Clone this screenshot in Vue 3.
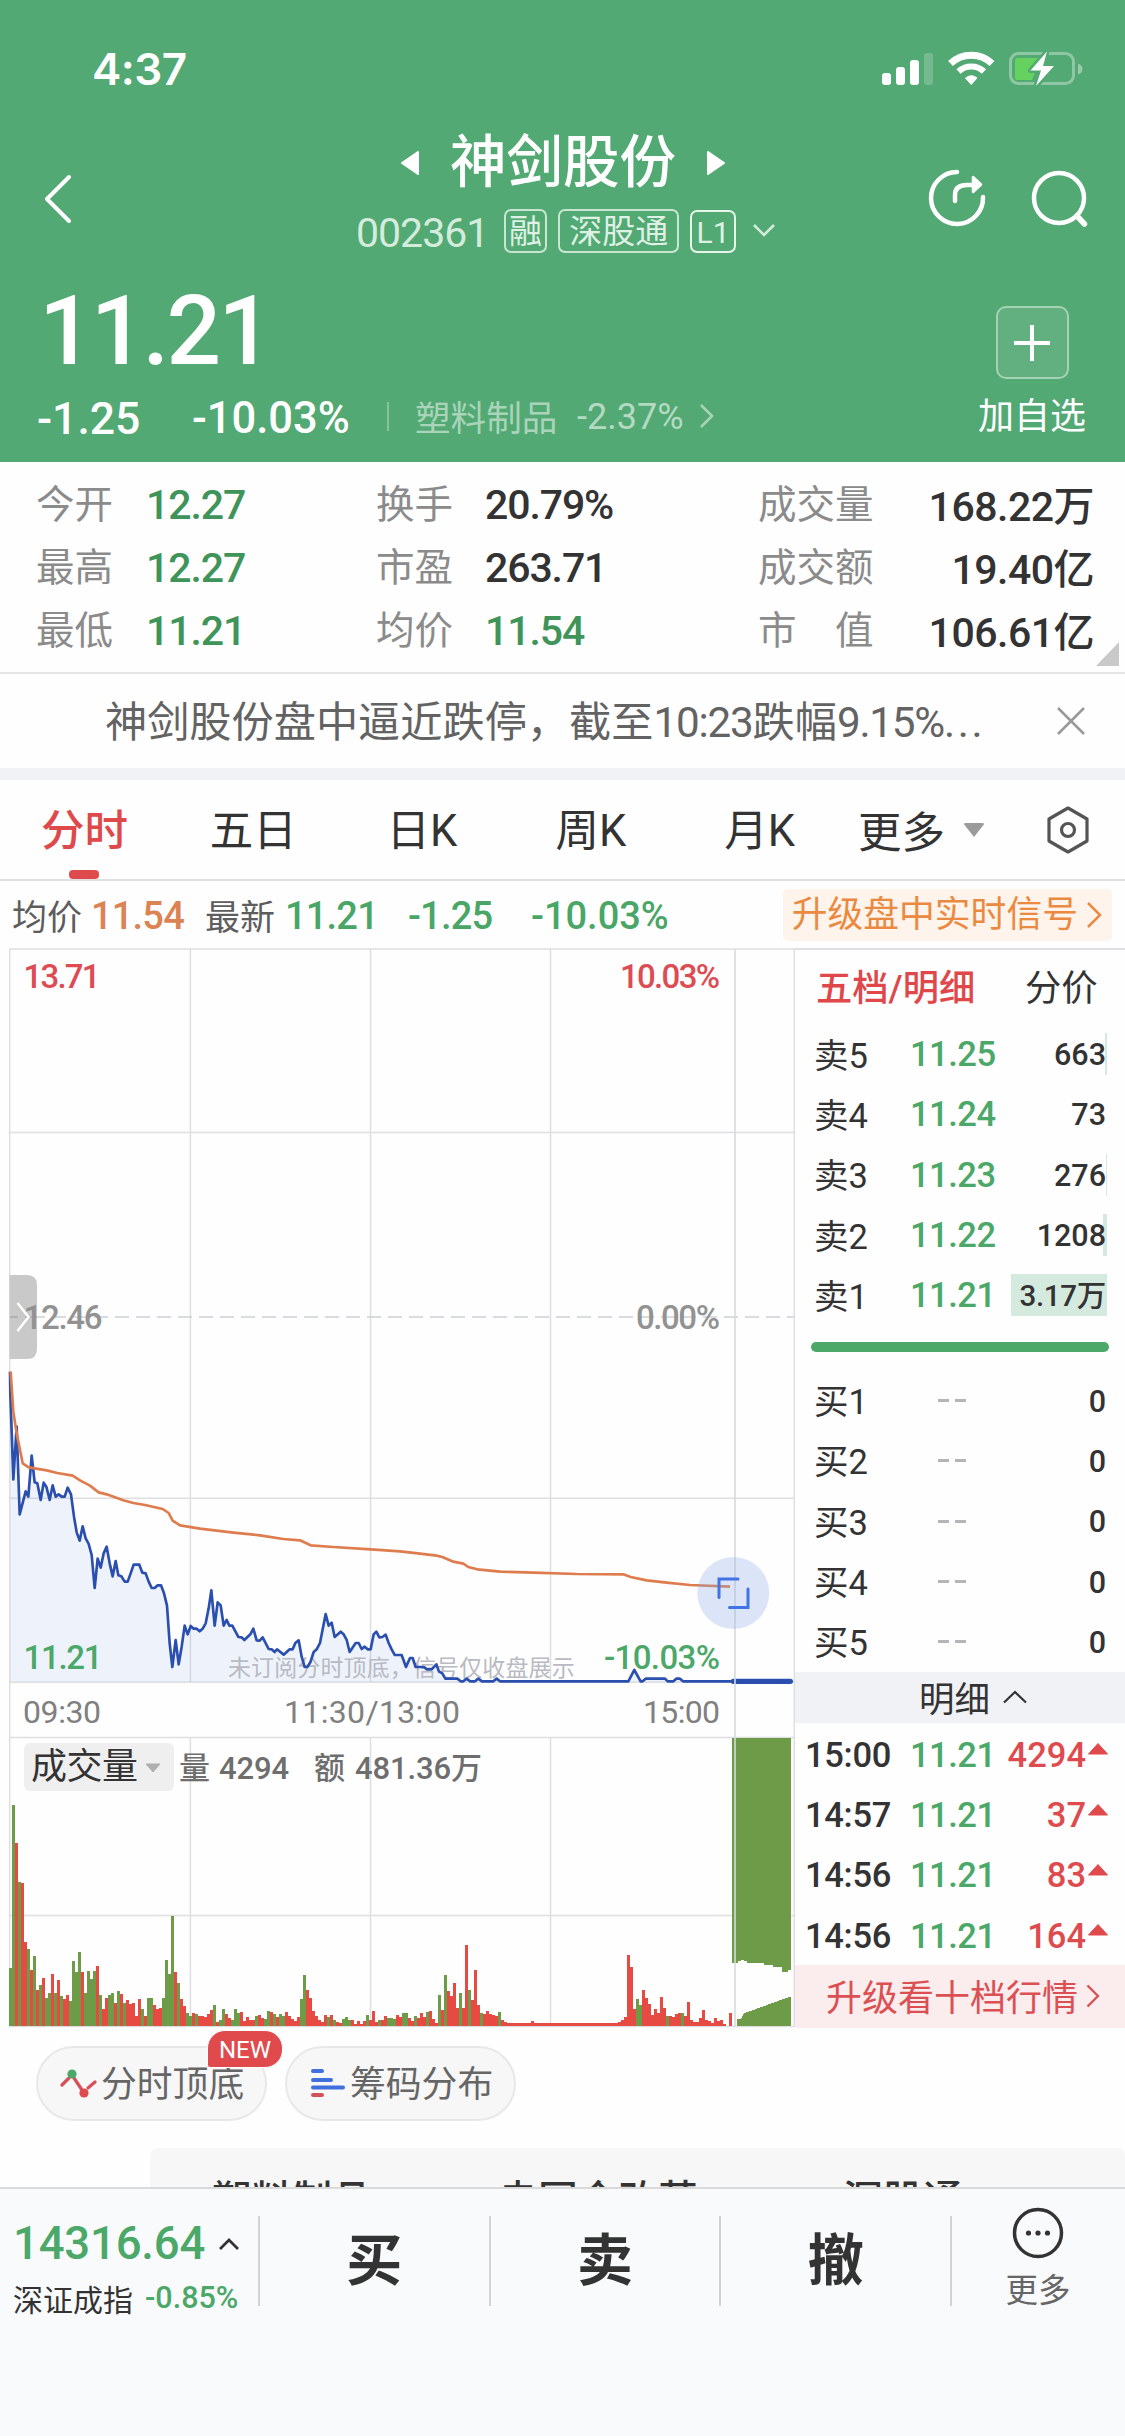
<script setup>
const quotes = [
  ['今开', '12.27', true, '换手', '20.79%', false, '成交量', '168.22万'],
  ['最高', '12.27', true, '市盈', '263.71', false, '成交额', '19.40亿'],
  ['最低', '11.21', true, '均价', '11.54', true, '市　值', '106.61亿'],
]
const periods = ['分时', '五日', '日K', '周K', '月K']
const asks = [
  ['卖5', '11.25', '663', 2],
  ['卖4', '11.24', '73', 0],
  ['卖3', '11.23', '276', 1],
  ['卖2', '11.22', '1208', 4],
  ['卖1', '11.21', '3.17万', 96],
]
const bids = ['买1', '买2', '买3', '买4', '买5']
const deals = [
  ['15:00', '11.21', '4294'],
  ['14:57', '11.21', '37'],
  ['14:56', '11.21', '83'],
  ['14:56', '11.21', '164'],
]

// Both chart series use a grid of one third of a pixel.
const price = '30,95 31,160 40,418 50,260 59,523 77,454 85,470 95,347 104,427 112,430 122,480 131,428 139,440 149,480 158,436 167,470 176,463 185,470 194,470 203,443 213,463 222,530 230,577 239,602 248,559 257,595 266,612 275,645 284,744 293,656 302,683 311,640 320,620 329,670 338,709 347,663 355,706 364,709 374,725 383,725 392,700 401,674 418,674 427,698 437,700 446,725 455,744 464,744 473,736 483,736 492,760 501,797 509,910 517,981 527,900 536,973 545,920 554,857 563,883 572,858 581,866 590,866 599,874 608,866 617,850 626,805 634,751 644,857 653,787 662,796 671,857 680,840 688,857 697,857 715,891 725,892 733,900 751,883 760,866 770,901 779,902 788,892 806,927 815,928 824,936 831,928 851,944 869,928 878,928 886,909 896,901 905,950 914,981 922,981 931,967 941,936 950,928 960,909 977,822 986,857 995,848 1004,891 1022,875 1031,883 1040,900 1049,936 1067,909 1076,909 1085,927 1094,920 1103,928 1112,928 1121,883 1129,875 1138,892 1147,891 1157,884 1166,909 1175,928 1184,945 1205,945 1218,981 1230,954 1238,954 1247,981 1272,981 1280,988 1295,988 1309,973 1317,995 1327,1000 1336,1016 1372,1016 1382,1024 1390,1024 1400,1016 1410,1024 1425,1024 1435,1016 1446,1024 1480,1024 1490,1016 1500,1024 1885,1024 1903,990 1922,1024 1928,1024 1937,1016 1995,1016 2003,1024 2020,1024 2029,1016 2040,1016 2049,1024 2200,1024'
const average = '32,95 40,215 50,280 68,370 86,382 140,391 172,399 218,407 240,421 270,437 296,457 320,463 370,481 400,489 435,495 488,507 506,519 518,542 540,556 600,566 700,578 780,586 850,597 900,601 932,616 1000,621 1112,628 1200,634 1260,641 1310,647 1327,651 1360,665 1390,671 1405,681 1432,688 1500,695 1600,698 1730,702 1870,703 1892,711 1940,721 2000,728 2070,735 2190,740'
const volume = 'g744 g254 r370 g487 r489 r667 g687 r750 g709 r810 g795 r775 g835 g819 r762 g820 r780 g829 r838 r825 g843 g723 g755 g697 r755 g820 g753 g776 g753 r738 g825 r867 r835 g825 g818 r849 g813 r823 g850 r841 r851 r850 r888 r837 g868 r887 g834 g834 r855 r867 r865 g834 g721 g762 g589 r755 g790 r838 r858 g879 g888 r878 g881 r888 r888 r890 r882 r870 g855 r906 g901 g868 r882 r893 g900 g867 g879 r877 r903 r891 r900 r900 g889 r884 r894 g898 g873 r876 g882 r891 g883 g888 r875 r888 r898 r903 r891 g837 g766 r809 r834 r874 r889 r900 r905 r885 g891 r886 g899 r905 r908 g897 g891 g899 r901 r911 r904 r911 r903 g885 r899 r874 r905 g901 r901 r889 g894 g894 g896 r884 r890 g880 g880 r894 r902 g888 r893 r880 r891 g876 r874 r898 r908 g825 r869 g766 r813 r829 r790 r864 g820 r864 r675 g810 r841 r750 r855 g880 r882 r874 r882 r884 r889 g876 r899 r905'
  .split(' ')
  .concat(Array.from({ length: 37 }, (_, k) => (k === 8 ? 'r902' : 'r910')))
  .concat('r907 r900 r890 r705 r742 r867 g837 g855 r811 r835 r853 r884 r866 r880 r832 r864 g888 r889 r891 r882 r878 g879 r888 r845 r900 r906 r906 r894 r869 r900 r903 r908 r893 r903 r900 r911 r918 r880'.split(' '))
  .map((b, i) => ({ x: 28 + 9 * i, y: +b.slice(1), up: b[0] === 'r' }))
</script>

<template>
  <div class="screen">
    <header class="hero">
      <div class="status">
        <span class="clock">4:37</span>
        <svg class="status-icons" width="206" height="40" viewBox="0 0 206 40">
          <g fill="#fff">
            <rect x="0" y="22" width="9" height="12" rx="3" />
            <rect x="14" y="16" width="9" height="18" rx="3" />
            <rect x="28" y="9" width="9" height="25" rx="3" />
            <rect x="42" y="2" width="9" height="32" rx="3" opacity=".2" />
          </g>
          <g fill="none" stroke="#fff">
            <path d="M68.5 12.5a30 30 0 0 1 41.500 0" stroke-width="7" />
            <path d="M76.500 20.500a18.500 18.500 0 0 1 25.500 0" stroke-width="6" />
          </g>
          <path d="M83.500 27q6-4.500 11.500 0l-5.800 6.500z" fill="#fff" stroke="#fff" stroke-width="1" stroke-linejoin="round" />
          <rect x="128.500" y="2.500" width="63" height="30" rx="8" fill="none" stroke="#fff" stroke-opacity=".35" stroke-width="3" />
          <path d="M196 12.500q4.500 1.500 4.500 5.500t-4.500 5.500z" fill="#fff" opacity=".4" />
          <path d="M135 7h24l-9 22h-15q-2 0-2-3V10q0-3 2-3z" fill="#65d260" />
          <path d="M165 0.500 148.500 19.500h10.500l-5 15.500 18-20h-11z" fill="#fff" stroke="#53a973" stroke-width="5" paint-order="stroke" stroke-linejoin="round" />
        </svg>
      </div>
      <div class="nav">
        <svg class="back" width="30" height="52" viewBox="0 0 30 52"><path d="M26 4 4 26l22 22" fill="none" stroke="#fff" stroke-width="4" stroke-linecap="round" stroke-linejoin="round" /></svg>
        <div class="title">
          <div class="name">
            <svg width="18" height="26" viewBox="0 0 18 26"><path d="M17 2v22L1 13z" fill="#fff" stroke="#fff" stroke-width="2" stroke-linejoin="round" /></svg>
            <b>神剑股份</b>
            <svg width="18" height="26" viewBox="0 0 18 26"><path d="M1 2v22l16-11z" fill="#fff" stroke="#fff" stroke-width="2" stroke-linejoin="round" /></svg>
          </div>
          <div class="codes">
            <span class="code">002361</span>
            <span class="tag">融</span><span class="tag wide">深股通</span><span class="tag level">L1</span>
            <svg width="24" height="16" viewBox="0 0 24 16"><path d="m2 2 10 10L22 2" fill="none" stroke="#d5ecdd" stroke-width="2.600" /></svg>
          </div>
        </div>
        <svg class="tools" width="165" height="62" viewBox="0 0 165 62">
          <g fill="none" stroke="#fff" stroke-width="4.500" stroke-linecap="round" stroke-linejoin="round">
            <path d="M31 5A26 26 0 1 0 57 30" />
            <path d="M29 34v-6q0-10 12-10h12" />
            <circle cx="133" cy="31" r="25" />
            <path d="m151 49 7.500 8" stroke-width="5.500" />
          </g>
          <path d="M47 10v15l8-7.500z" fill="#fff" stroke="#fff" stroke-width="2.500" stroke-linejoin="round" />
        </svg>
      </div>
      <div class="summary">
        <div>
          <div class="last">11.21</div>
          <div class="delta">
            <span class="chg">-1.25</span><span class="pct">-10.03%</span><i></i>
            <span class="sector">塑料制品</span><span class="sector-pct">-2.37%</span>
            <svg width="17" height="26" viewBox="0 0 17 26"><path d="m3 2 11 11L3 24" fill="none" stroke="#a9d4b9" stroke-width="2.500" /></svg>
          </div>
        </div>
        <div class="follow">
          <span class="plus"><svg width="36" height="36" viewBox="0 0 36 36"><path d="M18 1v34M1 18h34" stroke="#fff" stroke-width="4" stroke-linecap="round" /></svg></span>
          <span>加自选</span>
        </div>
      </div>
    </header>

    <section class="quotes">
      <div v-for="q in quotes" :key="q[0]" class="quote">
        <span class="k">{{ q[0] }}</span><span class="v" :class="{ down: q[2] }">{{ q[1] }}</span>
        <span class="k">{{ q[3] }}</span><span class="v" :class="{ down: q[5] }">{{ q[4] }}</span>
        <span class="k">{{ q[6] }}</span><span class="v end">{{ q[7] }}</span>
      </div>
      <i class="corner"></i>
    </section>

    <section class="news">
      <span>神剑股份盘中逼近跌停，截至<em>10:23</em>跌幅<em>9.15%</em><em class="dots">...</em></span>
      <svg width="28" height="28" viewBox="0 0 28 28"><path d="m1 1 26 26M27 1 1 27" stroke="#999" stroke-width="2.500" /></svg>
    </section>

    <nav class="periods">
      <span v-for="(p, i) in periods" :key="p" class="period" :class="{ on: i === 0 }">{{ p }}</span>
      <span class="more">更多<i></i></span>
      <svg width="46" height="50" viewBox="0 0 46 50"><g fill="none" stroke="#555" stroke-width="3.200" stroke-linejoin="round"><path d="M23 3 42 14v22L23 47 4 36V14z" /><circle cx="23" cy="25" r="6.500" /></g></svg>
    </nav>

    <section class="legend">
      <span class="lk">均价</span><span class="lv avg">11.54</span>
      <span class="lk second">最新</span><span class="lv">11.21</span>
      <span class="lv a">-1.25</span><span class="lv b">-10.03%</span>
      <span class="signal">升级盘中实时信号<svg width="17" height="28" viewBox="0 0 17 28"><path d="m2 2 12 12L2 26" fill="none" stroke="#ea8a41" stroke-width="2.500" /></svg></span>
    </section>

    <main class="market">
      <svg class="chart" width="795" height="1080" viewBox="0 948 795 1080">
        <g stroke="#dfdfe1" stroke-width="1.500" fill="none">
          <path d="M9 949H795M9 1132.500H794M9 1498.300H794M9 1682.300H794M9 1737.500H794M9 1915.400H794M9 2026.500H794" />
          <path d="M9.700 949V2027M190.400 949V1682M190.400 1738V2026M370.500 949V1682M370.500 1738V2026M550.500 949V1682M550.500 1738V2026M794.300 949V2027" />
          <path d="M10 1317H794" stroke="#cdd1d5" stroke-dasharray="14 7" />
        </g>
        <g transform="translate(0 1340) scale(.33333)">
          <polygon :points="price + ' 2200,1026 30,1026'" fill="#4377d8" fill-opacity=".085" />
          <text x="684" y="1008" font-size="69" textLength="1040" fill="#b9bac2">未订阅分时顶底，信号仅收盘展示</text>
          <polyline :points="price" fill="none" stroke="#2a4fae" stroke-width="8" stroke-linejoin="round" />
          <polyline :points="average" fill="none" stroke="#df7c4d" stroke-width="8" stroke-linejoin="round" />
          <path d="M2200 1024H2371" stroke="#2a4fae" stroke-width="16" stroke-linecap="round" />
        </g>
        <g transform="translate(0 1720) scale(.33333)" shape-rendering="crispEdges">
          <rect v-for="b in volume" :key="b.x" :x="b.x" :y="b.y" width="9" :height="918 - b.y" :fill="b.up ? '#e64a42' : '#6d9b47'" />
          <path d="M2196 54H2373V750H2364V755H2346V740H2319V735H2292V728H2240V722H2232V720H2223V724H2214V730H2196zM2210 918V898H2223L2232 880 2373 829V918z" fill="#6d9b47" />
        </g>
        <path d="M735 949V2026" stroke="#d9dadc" stroke-width="1.600" />
        <path d="M9.500 1275H27q10 0 10 10v64q0 10-10 10H9.500z" fill="#c9c9c9" />
        <path d="M10 1317h8m7 0h12" stroke="#aaa" stroke-width="1.500" />
        <g font-size="33" font-weight="500">
          <text x="23.500" y="987.500" textLength="77" fill="#dd4b53">13.71</text>
          <text x="620" y="987.500" textLength="100" fill="#dd4b53">10.03%</text>
          <text x="23.500" y="1328.500" textLength="79" fill="#929292">12.46</text>
          <text x="636" y="1328.500" textLength="84" fill="#929292">0.00%</text>
          <text x="23.500" y="1669" textLength="79" fill="#4ca869">11.21</text>
          <text x="604" y="1669" textLength="116" fill="#4ca869">-10.03%</text>
        </g>
        <path d="m17.500 1303 11 14-11 14" fill="none" stroke="#fff" stroke-width="2.500" />
        <g font-size="32" fill="#808080">
          <text x="23" y="1722.500" textLength="78">09:30</text>
          <text x="284" y="1722.500" textLength="176">11:30/13:00</text>
          <text x="643" y="1722.500" textLength="77">15:00</text>
        </g>
        <rect x="24" y="1743" width="150" height="48" rx="6" fill="#efefef" />
        <text x="31" y="1778.500" font-size="36" textLength="107" fill="#333">成交量</text>
        <path d="M146 1764h14l-7 8z" fill="#b0b0b0" stroke="#b0b0b0" stroke-linejoin="round" />
        <g font-size="31" fill="#6e6e6e" font-weight="500">
          <text x="179" y="1778.500">量</text><text x="219" y="1778.500" textLength="70">4294</text>
          <text x="314" y="1778.500">额</text><text x="355" y="1778.500" textLength="96">481.36</text><text x="451" y="1778.500">万</text>
        </g>
        <circle cx="733.300" cy="1593" r="36" fill="#8fade9" fill-opacity=".3" />
        <path d="M719 1597.500V1579h19M748 1589v18.500h-18.500" fill="none" stroke="#3f73e6" stroke-width="3" stroke-linecap="round" />
      </svg>

      <aside class="book">
        <div class="book-tabs"><b>五档/明细</b><span>分价</span></div>
        <div v-for="a in asks" :key="a[0]" class="level-row">
          <span class="side">{{ a[0] }}</span><span class="p">{{ a[1] }}</span>
          <span class="qty"><i :style="{ width: a[3] + 'px' }"></i><em>{{ a[2] }}</em></span>
        </div>
        <div class="ratio"></div>
        <div v-for="b in bids" :key="b" class="level-row">
          <span class="side">{{ b }}</span><span class="none"><i></i><i></i></span><span class="qty"><em>0</em></span>
        </div>
        <div class="detail"><span>明细</span><svg width="24" height="14" viewBox="0 0 24 14"><path d="M1 12.500 12 2l11 10.500" fill="none" stroke="#333" stroke-width="2.200" /></svg></div>
        <div v-for="(d, i) in deals" :key="i" class="deal">
          <span class="t">{{ d[0] }}</span><span class="p">{{ d[1] }}</span><span class="n">{{ d[2] }}</span>
          <svg width="22" height="13" viewBox="0 0 22 13"><path d="M11 1.500 20.500 12H1.500z" fill="#e04a4d" stroke="#e04a4d" stroke-linejoin="round" /></svg>
        </div>
        <div class="upgrade"><span>升级看十档行情</span><svg width="14" height="24" viewBox="0 0 14 24"><path d="m1.500 1.500 10.500 10.500-10.500 10.500" fill="none" stroke="#dc4f52" stroke-width="2.300" /></svg></div>
      </aside>
    </main>

    <section class="chips">
      <div class="chip">
        <svg width="37" height="30" viewBox="0 0 37 30"><path d="m2 16 7-7m5 0 8 12m6-2 7-6" stroke="#d9505a" stroke-width="3.200" fill="none" stroke-linecap="round" /><circle cx="12" cy="5" r="4.600" fill="#4aa869" /><circle cx="24" cy="24" r="4.600" fill="#df4a4d" /></svg>
        <span>分时顶底</span>
        <b class="new">NEW</b>
      </div>
      <div class="chip">
        <svg width="37" height="30" viewBox="0 0 37 30"><g stroke-width="4" stroke-linecap="round"><path d="M4 2h9M4 11h18M4 18.500h30" stroke="#3f70dd" /><path d="M4 26h9" stroke="#d4505a" /></g></svg>
        <span>筹码分布</span>
      </div>
    </section>
    <section class="boards"><span>塑料制品</span><span>央国企改革</span><span>深股通</span></section>

    <footer class="dock">
      <div class="index">
        <div class="index-value">14316.64<svg width="22" height="14" viewBox="0 0 22 14"><path d="m2 12 9-9 9 9" fill="none" stroke="#333" stroke-width="2.800" /></svg></div>
        <div class="index-name">深证成指<span>-0.85%</span></div>
      </div>
      <b>买</b><b>卖</b><b>撤</b>
      <div class="dock-more">
        <svg width="52" height="52" viewBox="0 0 52 52"><circle cx="26" cy="26" r="23.500" fill="none" stroke="#333" stroke-width="3.500" /><g fill="#333"><circle cx="16.500" cy="26" r="2.600" /><circle cx="26" cy="26" r="2.600" /><circle cx="35.500" cy="26" r="2.600" /></g></svg>
        <span>更多</span>
      </div>
    </footer>
  </div>
</template>

<style>
body { background: #fff; }
</style>

<style scoped>
* { box-sizing: border-box; }
i, em { font-style: normal; }
svg { display: block; flex: none; }
.screen { width: 1125px; height: 2436px; overflow: hidden; display: flex; flex-direction: column; background: #fefefe; color: #333; font-family: Roboto, "Noto Sans CJK SC", sans-serif; white-space: nowrap; }

.hero { height: 462px; flex: none; background: #53a973; color: #fff; }
.status { height: 125px; padding: 51px 38px 0 92px; display: flex; justify-content: space-between; }
.clock { font: 600 44px/36px Inter, sans-serif; letter-spacing: -0.5px; }
.status-icons { margin-right: -1px; }
.nav { height: 155px; display: flex; padding: 0 34px 0 43px; }
.back { margin-top: 48px; }
.tools { margin: 42px 0 0 auto; }
.title { display: flex; flex-direction: column; align-items: center; width: 420px; margin-left: 280px; }
.name { display: flex; align-items: center; gap: 31px; height: 75px; }
.name b { font-size: 56.500px; font-weight: 500; line-height: 76px; }
.codes { display: flex; align-items: center; height: 62px; width: 420px; margin-left: 6px; }
.code { font-size: 41px; letter-spacing: -1px; color: #d5ecdd; width: 148px; padding-top: 4px; }
.tag { width: 44px; height: 44px; border: 2px solid #c8e6d2; border-radius: 7px; font-size: 33px; line-height: 41px; text-align: center; color: #dff1e5; margin-right: 11px; }
.wide { width: 121px; }
.level { width: 46px; height: 43px; font-size: 30px; border-color: #e6f4ea; margin-right: 16px; }
.summary { display: flex; justify-content: space-between; padding: 0 39px 0 36px; height: 182px; }
.last { font-size: 96px; font-weight: 500; line-height: 102px; height: 98px; letter-spacing: -2.800px; margin-left: 3px; }
.delta { display: flex; align-items: center; height: 76px; }
.chg { font-size: 44.500px; font-weight: 500; width: 156px; padding: 5px 0 0 1px; }
.pct { font-size: 43.500px; font-weight: 500; width: 195px; padding-top: 5px; }
.delta i { width: 2px; height: 29px; background: #86c39c; margin-right: 26px; }
.sector { font-size: 35.600px; color: #a9d4b9; width: 162px; padding-bottom: 2px; }
.sector-pct { font-size: 36px; color: #b4dac2; width: 121px; padding-top: 1px; }
.follow { display: flex; flex-direction: column; align-items: center; width: 108px; padding-top: 26px; font-size: 36px; line-height: 76px; }
.plus { width: 73px; height: 73px; border: 2px solid #a5d2b5; border-radius: 10px; background: #62b080; display: flex; align-items: center; justify-content: center; }

.quotes { position: relative; height: 212px; flex: none; padding: 10px 31px 0 36px; border-bottom: 2px solid #e6e6e6; }
.quote { display: grid; grid-template-columns: 110px 230px 109px 273px 130px 1fr; height: 63px; align-items: center; }
.k { font-size: 38.500px; color: #8b8b8b; padding-bottom: 6px; }
.v { font-size: 41px; font-weight: 500; letter-spacing: -1.100px; padding-top: 2px; }
.down { color: #3f9459; }
.end { text-align: right; letter-spacing: -0.5px; padding: 0 0 2px; }
.corner { position: absolute; right: 6px; bottom: 6px; border: solid transparent; border-width: 24px 0 0 23px; border-bottom: 24px solid #c9c9c9; border-top: 0; }

.news { height: 106px; flex: none; border-bottom: 12px solid #f1f2f6; display: flex; align-items: center; justify-content: space-between; padding: 0 40px 0 105px; font-size: 42.200px; color: #636363; }
.news span { padding-bottom: 5px; }
.news em { letter-spacing: -1.200px; }
.news .dots { letter-spacing: 2.600px; }

.periods { height: 101px; flex: none; display: flex; align-items: center; border-bottom: 2px solid #dfdfe1; font-size: 43.500px; }
.period { width: 168.800px; text-align: center; height: 99px; line-height: 103px; display: flex; flex-direction: column; align-items: center; }
.on { color: #de494c; font-weight: 500; }
.on::after { content: ""; width: 30px; height: 9px; margin-top: -13px; border-radius: 4px; background: #e04a4d; flex: none; }
.more { display: flex; align-items: center; margin-left: 14px; width: 187px; }
.more i { margin-left: 18px; border: solid transparent; border-width: 14px 11px 0; border-top-color: #9b9b9b; border-radius: 3px; }

.legend { height: 67px; flex: none; display: flex; align-items: center; padding: 0 13px 0 12px; }
.lk { font-size: 35px; color: #5d5d5d; width: 80px; padding-bottom: 1px; }
.second { margin-left: 19px; }
.lv { font-size: 38px; font-weight: 500; letter-spacing: -0.8px; color: #49a666; width: 94px; padding-top: 2px; }
.avg { color: #dc8354; margin-left: -1px; margin-right: 1px; }
.a { margin-left: 29px; }
.b { margin-left: 29px; letter-spacing: 0; }
.signal { margin-left: auto; height: 52px; display: flex; align-items: center; gap: 8px; padding: 0 9px; border-radius: 5px; background: #fef4ec; color: #ea8a41; font-size: 35.800px; line-height: 50px; }

.market { height: 1080px; flex: none; display: flex; }
.book { width: 330px; border-top: 2px solid #dfdfe1; font-size: 34.500px; }
.book-tabs { height: 74px; display: flex; align-items: center; padding: 0 0 4px 21px; font-size: 36.300px; }
.book-tabs b { font-weight: 500; color: #df474b; width: 209px; }
.level-row { height: 60.300px; display: flex; align-items: center; padding-left: 19px; }
.side { width: 96px; padding-bottom: 3px; }
.p { width: 90px; font-weight: 500; color: #4ba868; letter-spacing: -0.5px; }
.qty { position: relative; width: 107px; height: 42px; display: flex; justify-content: flex-end; }
.qty i { height: 42px; background: #d5eadf; }
.qty em { position: absolute; right: 1px; top: 0; line-height: 44px; font-size: 30.500px; font-weight: 500; }
.level-row:nth-child(6) .qty em { font-size: 29.500px; letter-spacing: -0.3px; }
.ratio { margin: 17px 16px 18px; height: 10px; border-radius: 5px; background: #4ba868; }
.none { width: 90px; display: flex; gap: 6px; padding-left: 28px; }
.none i { width: 11px; height: 3px; background: #b5b5b8; }
.detail { height: 51px; display: flex; align-items: center; gap: 13px; background: #f1f2f6; font-size: 35.500px; padding-left: 124px; }
.detail span { padding-bottom: 2px; }
.deal { height: 60.400px; display: flex; align-items: center; padding: 3px 0 0 10px; }
.deal .t { width: 105px; font-weight: 500; font-size: 34.500px; letter-spacing: -0.3px; }
.deal .n { width: 86px; text-align: right; color: #de4b4e; font-weight: 500; }
.deal svg { margin: -12px 0 0 1px; }
.deal .p { width: 90px; }
.upgrade { height: 63px; display: flex; align-items: center; padding-left: 31px; gap: 8px; background: #fbeced; color: #dc4f52; font-size: 36px; }
.upgrade span { padding-bottom: 3px; }

.chips { height: 120px; flex: none; display: flex; gap: 18px; padding: 18px 36px 0; }
.chip { position: relative; width: 231px; height: 75px; border: 2px solid #e8e8e8; border-radius: 38px; background: #f7f7f7; display: flex; align-items: center; padding-left: 22px; gap: 4px; font-size: 35.800px; color: #666; }
.chip span { padding-bottom: 5px; }
.new { position: absolute; left: 169px; top: -18px; width: 76px; height: 38px; border: 1px solid #fff; border-radius: 18px 18px 18px 3px; background: #e04a4d; color: #fff; font-size: 24px; font-weight: 400; line-height: 38px; text-align: center; }
.boards { height: 39px; flex: none; margin-left: 150px; overflow: hidden; border-radius: 8px 8px 0 0; background: #f7f7f7; display: flex; font-size: 40px; font-weight: 500; line-height: 40px; padding: 33px 0 0 62px; }
.boards span:nth-child(1) { width: 286px; }
.boards span:nth-child(2) { width: 345px; }

.dock { height: 249px; flex: none; border-top: 2px solid #dadada; background: #f9fafc; display: flex; padding-top: 27px; }
.dock > b { width: 230.700px; height: 90px; border-left: 2px solid #d3d3d6; font-size: 56px; font-weight: 700; line-height: 91px; text-align: center; }
.index { width: 258px; padding-left: 13px; }
.index-value { display: flex; align-items: center; gap: 13px; height: 55px; font-size: 45.500px; font-weight: 500; color: #4ba868; letter-spacing: -0.2px; }
.index-name { display: flex; align-items: center; gap: 12px; height: 53px; font-size: 30px; }
.index-name span { color: #4ba868; font-weight: 500; font-size: 30.500px; }
.dock-more { width: 174px; height: 90px; border-left: 2px solid #d3d3d6; display: flex; flex-direction: column; align-items: center; font-size: 32.500px; line-height: 64px; color: #666; }
.dock-more svg { margin-top: -9px; }
</style>
